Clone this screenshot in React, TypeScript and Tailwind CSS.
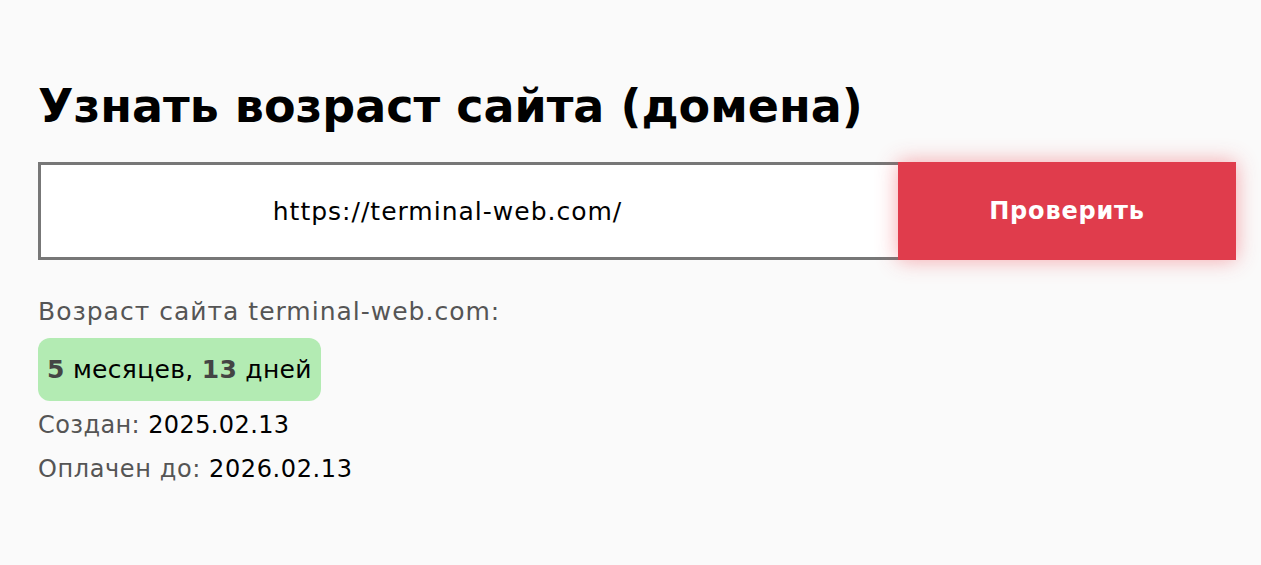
export default function App() {
  return (
    <div
      className="min-h-[565px] bg-[#fafafa] px-[38px] pt-[73px] text-[#000]"
      style={{ fontFamily: '"DejaVu Sans", "Noto Sans", sans-serif' }}
    >
      <h1 className="text-[46px] font-bold leading-[66px] text-black">Узнать возраст сайта (домена)</h1>
      <form className="mt-[23px] flex w-[1198px]" onSubmit={e => e.preventDefault()}>
        <input
          defaultValue="https://terminal-web.com/"
          className="h-[98px] w-[860px] border-[3px] border-r-0 border-[#777] bg-white pr-[44px] text-center text-[25px] tracking-[1px] text-black outline-none"
        />
        <button
          type="submit"
          className="h-[98px] flex-1 bg-[#e03c4c] text-[24px] font-bold tracking-[0.8px] text-white shadow-[0_0_20px_rgba(240,60,70,0.45)]"
        >
          Проверить
        </button>
      </form>
      <div className="mt-[36px] text-[25px] tracking-[1px] text-[#555]">
        <div className="leading-[32px]">Возраст сайта terminal-web.com:</div>
        <div className="mt-[10px] inline-flex h-[63px] items-center rounded-[12px] bg-[#b3ebb3] px-[9px] text-[25px] tracking-[0.3px] text-black">
          <b className="text-[#444]">5</b>&nbsp;месяцев,&nbsp;<b className="text-[#444]">13</b>&nbsp;дней
        </div>
        <div className="mt-[4px] text-[24px] leading-[40px] tracking-[0.4px]">
          Создан: <span className="text-black">2025.02.13</span>
        </div>
        <div className="mt-[4px] text-[24px] leading-[40px] tracking-[0.6px]">
          Оплачен до: <span className="text-black">2026.02.13</span>
        </div>
      </div>
    </div>
  );
}
